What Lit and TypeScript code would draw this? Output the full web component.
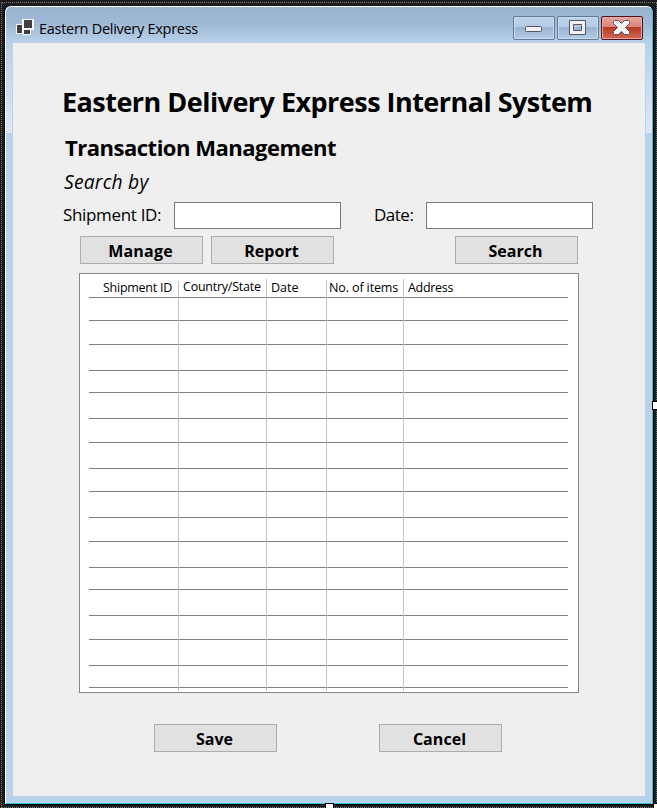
import { LitElement, html, css } from "lit";
import { customElement } from "lit/decorators.js";

// Heights of the hand-placed rules in the list, header row first.
const ROWS = [19, 23, 24, 26, 22, 26, 24, 26, 23, 26, 24, 26, 22, 26, 24, 26, 22];

const COLUMNS = [
  { name: "Shipment ID", kind: "c-ship" },
  { name: "Country/State", kind: "c-state" },
  { name: "Date", kind: "c-date" },
  { name: "No. of items", kind: "c-items" },
  { name: "Address", kind: "c-addr" },
];

@customElement("shipment-table")
class ShipmentTable extends LitElement {
  static styles = css`
    :host {
      display: block;
      box-sizing: border-box;
      width: 500px;
      height: 420px;
      border: 1px solid #828790;
      background: #fff;
      position: relative;
      padding: 5px 10px 0 9px;
    }
    .row {
      box-sizing: border-box;
      border-bottom: 1px solid #828282;
    }
    .columns {
      position: absolute;
      inset: 5px 10px 1px 9px;
      display: grid;
      grid-template-columns: 90px 88px 60px 77px 164px;
    }
    .col {
      box-sizing: border-box;
      border-right: 1px solid #c2c2c2;
      font-size: 12.5px;
      line-height: 18px;
      white-space: nowrap;
    }
    .c-ship { margin-top: 2px; padding-left: 14px; line-height: 13px; letter-spacing: -0.26px; }
    .c-state { padding-left: 4px; line-height: 16px; letter-spacing: -0.24px; }
    .c-date { margin-top: 1px; padding-left: 4px; line-height: 16px; }
    .c-items { padding-left: 2px; letter-spacing: -0.12px; }
    .c-addr { border-right: 0; padding-left: 4px; letter-spacing: -0.3px; }
  `;
  render() {
    return html`
      ${ROWS.map((h) => html`<div class="row" style="height:${h}px"></div>`)}
      <div class="columns">
        ${COLUMNS.map((c) => html`<div class="col ${c.kind}">${c.name}</div>`)}
      </div>
    `;
  }
}

@customElement("app-root")
class AppRoot extends LitElement {
  static styles = css`
    :host {
      display: block;
      box-sizing: border-box;
      width: 657px;
      height: 808px;
      overflow: hidden;
      position: relative;
      background: #1c1c1e;
      padding: 6px 4px 4px 4px;
      font-family: "Open Sans", "Noto Sans", sans-serif;
      color: #000;
    }
    .dots {
      position: absolute;
      inset: 2px 0 0 1px;
      border: 1px dotted #777;
    }
    .handle {
      position: absolute;
      background: #fff;
      border: 1px solid #000;
      box-sizing: border-box;
    }
    .handle.right { right: -2px; top: 401px; width: 7px; height: 9px; }
    .handle.bottom { left: 325px; bottom: -3px; width: 9px; height: 8px; }
    .handle.corner { right: -4px; bottom: -3px; width: 8px; height: 8px; }
    .window {
      position: relative;
      box-sizing: border-box;
      width: 650px;
      height: 799px;
      border: solid #000;
      border-width: 0 1px 1px 1px;
      border-radius: 6px 6px 0 0;
    }
    .frame {
      box-sizing: border-box;
      height: 798px;
      border: 1px solid #fff;
      border-right-color: #35c5e4;
      border-bottom-color: #35c5e4;
      border-radius: 6px 6px 0 0;
      padding: 0 7px 7px;
      background:
        linear-gradient(#b9d1ea, #dfe8f5) left 36px / 6px 90px no-repeat,
        linear-gradient(#b9d1ea, #dfe8f5) right 36px / 6px 90px no-repeat,
        linear-gradient(#99b4d1, #a0bad6 17px, #b9d1ea 36px) top / 100% 36px no-repeat,
        #b9d1ea;
    }
    .title-bar {
      display: flex;
      align-items: flex-start;
      height: 36px;
    }
    .app-icon { margin: 12px 5px 0 3px; }
    .caption {
      flex: 1;
      margin-top: 9px;
      font-size: 14.5px;
      line-height: 26px;
      letter-spacing: -0.28px;
    }
    .controls { display: flex; gap: 2px; margin: 9px 2px 0 0; }
    .control {
      box-sizing: border-box;
      width: 42px;
      height: 24px;
      border: 1px solid #5f7896;
      border-radius: 2px;
      box-shadow: inset 0 0 0 1px #c9ddf1;
      background: linear-gradient(#bdd2e9, #b4cbe4 10px, #98b2cf 10px, #b4cce5);
    }
    .control.close {
      border-color: #4c1320;
      box-shadow: inset 0 0 0 1px #e7a79e;
      background: linear-gradient(#e5a59b, #d98478 10px, #b73720 10px, #cf6a52);
    }
    .control svg { display: block; }
    .body {
      box-sizing: border-box;
      height: 753px;
      width: 632px;
      background: #efefef;
      padding-top: 40px;
    }
    h1, h2, p { margin: 0; white-space: nowrap; }
    h1 { margin-left: 49px; font-size: 27px; line-height: 38px; letter-spacing: -0.53px; }
    h2 { margin: 11px 0 0 52px; font-size: 22px; line-height: 30px; letter-spacing: -0.49px; }
    .search-by { margin: 7px 0 0 51px; font-size: 19.3px; line-height: 26px; letter-spacing: 0.2px; font-style: italic; }
    .fields {
      display: grid;
      grid-template-columns: 111px 167px 33px 52px 167px;
      margin: 7px 0 0 50px;
      font-size: 17px;
      line-height: 25px;
      letter-spacing: -0.33px;
    }
    .date { letter-spacing: -0.5px; }
    .box {
      box-sizing: border-box;
      height: 27px;
      border: 1px solid #7a7a7a;
      background: #fff;
    }
    .actions { display: flex; margin: 7px 0 0 67px; gap: 8px; }
    .actions .search { margin-left: 113px; }
    button {
      box-sizing: border-box;
      width: 123px;
      height: 28px;
      padding: 0 2px 0 0;
      border: 1px solid #adadad;
      background: #e1e1e1;
      color: #000;
      font: bold 16px/28px "Open Sans", "Noto Sans", sans-serif;
      letter-spacing: 0.05px;
    }
    .manage { letter-spacing: 0.2px; }
    shipment-table { margin: 9px 0 0 66px; }
    .footer { display: flex; gap: 102px; margin: 31px 0 0 141px; }
  `;
  render() {
    return html`
      <div class="dots"></div>
      <div class="window">
        <div class="frame">
          <div class="title-bar">
            <svg class="app-icon" width="18" height="16" viewBox="0 0 18 16" shape-rendering="crispEdges">
              <path fill="#f4f6f9" d="M0 5H6V0H18V11H15V16H7V15H0Z" />
              <path fill="#404040" d="M1 6H6V14H1ZM8 1H16V9H8ZM8 11H14V15H8Z" />
            </svg>
            <div class="caption">Eastern Delivery Express</div>
            <div class="controls">
              <div class="control">
                <svg width="40" height="22" viewBox="0 0 40 22">
                  <rect x="11.5" y="9.5" width="16" height="5" rx="1" fill="#f1f1f1" stroke="#535666" />
                </svg>
              </div>
              <div class="control">
                <svg width="40" height="22" viewBox="0 0 40 22">
                  <path fill="#f1f1f1" fill-rule="evenodd" stroke="#535666" d="M11.5 3.5H27.5V17.5H11.5ZM15.5 7.5V13.5H23.5V7.5Z" />
                </svg>
              </div>
              <div class="control close">
                <svg width="40" height="22" viewBox="0 0 40 22">
                  <path fill="#f4f4f4" stroke="#535666" stroke-linejoin="round" d="M12.5 3.5H16.5L19.5 6.5L22.5 3.5H26.5L27.5 4.5V6.5L23.5 10.5L27.5 14.5V16.5L26.5 17.5H22.5L19.5 14.5L16.5 17.5H12.5L11.5 16.5V14.5L15.5 10.5L11.5 6.5V4.5Z" />
                </svg>
              </div>
            </div>
          </div>
          <div class="body">
            <h1>Eastern Delivery Express Internal System</h1>
            <h2>Transaction Management</h2>
            <p class="search-by">Search by</p>
            <div class="fields">
              <label>Shipment ID:</label>
              <div class="box"></div>
              <span></span>
              <label class="date">Date:</label>
              <div class="box"></div>
            </div>
            <div class="actions">
              <button class="manage">Manage</button>
              <button>Report</button>
              <button class="search">Search</button>
            </div>
            <shipment-table></shipment-table>
            <div class="footer">
              <button>Save</button>
              <button>Cancel</button>
            </div>
          </div>
        </div>
      </div>
      <div class="handle right"></div>
      <div class="handle bottom"></div>
      <div class="handle corner"></div>
    `;
  }
}
